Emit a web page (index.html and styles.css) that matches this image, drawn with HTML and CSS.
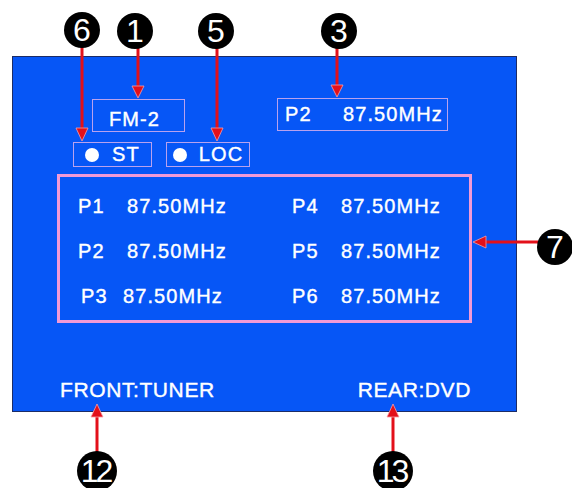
FILE: index.html
```html
<!DOCTYPE html>
<html lang="en">
<head>
    <meta charset="UTF-8">
    <meta name="viewport" content="width=device-width, initial-scale=1.0">
    <title>Tuner screen</title>
    <link rel="stylesheet" href="styles.css">
</head>
<body>
    <div id="figure">
        <div id="screen">
            <div class="rowTop">
                <div class="box band">FM-2</div>
                <div class="box preset"><span class="num">P2</span><span>87.50MHz</span></div>
            </div>

            <div class="rowFlags">
                <div class="box flag"><i class="dot"></i>ST</div>
                <div class="box flag loc"><i class="dot"></i>LOC</div>
            </div>

            <div id="memory">
                <div class="slot"><span class="num">P1</span>87.50MHz</div>
                <div class="slot"><span class="num">P4</span>87.50MHz</div>
                <div class="slot"><span class="num">P2</span>87.50MHz</div>
                <div class="slot"><span class="num">P5</span>87.50MHz</div>
                <div class="slot tight"><span class="num">P3</span>87.50MHz</div>
                <div class="slot"><span class="num">P6</span>87.50MHz</div>
            </div>

            <div class="sources">
                <span>FRONT:TUNER</span>
                <span>REAR:DVD</span>
            </div>
        </div>

        <!-- callout arrows -->
        <svg id="arrows" width="572" height="488" viewBox="0 0 572 488">
            <g stroke="#e3101a" stroke-width="3">
                <line x1="82" y1="46" x2="82" y2="130"/>
                <line x1="138" y1="48" x2="138" y2="88"/>
                <line x1="217" y1="48" x2="217" y2="130"/>
                <line x1="337" y1="48" x2="337" y2="87"/>
                <line x1="538" y1="242" x2="484" y2="242"/>
                <line x1="97" y1="452" x2="97" y2="414"/>
                <line x1="393" y1="452" x2="393" y2="414"/>
            </g>
            <g fill="#e3101a" stroke="#f7a0a8" stroke-width="0.8">
                <polygon points="76,128 88,128 82,141"/>
                <polygon points="132,86 144,86 138,98"/>
                <polygon points="211,128 223,128 217,141"/>
                <polygon points="331,85 343,85 337,97"/>
                <polygon points="486,236 486,248 473,242"/>
                <polygon points="91,417 103,417 97,404"/>
                <polygon points="387,417 399,417 393,404"/>
            </g>
        </svg>

        <div class="callout c6">6</div>
        <div class="callout c1">1</div>
        <div class="callout c5">5</div>
        <div class="callout c3">3</div>
        <div class="callout c7">7</div>
        <div class="callout wide c12">12</div>
        <div class="callout wide c13">13</div>
    </div>
</body>
</html>
```

FILE: styles.css
```css
body {
    margin: 0;
    padding: 0;
    background-color: #fff;
    font-family: "Liberation Sans", Arial, sans-serif;
}

#figure {
    position: relative;
    width: 572px;
    height: 488px;
    overflow: hidden;
    padding: 56px 0 0 12px;
    box-sizing: border-box;
}

#screen {
    width: 505px;
    height: 356px;
    box-sizing: border-box;
    border: 1px solid #1c2c66;
    background-color: #0656f6;
    color: #fff;
    font-size: 20px;
    letter-spacing: 1.1px;
    -webkit-text-stroke: 0.4px #fff;
    overflow: hidden;
}

.box {
    box-sizing: border-box;
    border: 1px solid #b9a2ee;
    display: flex;
    align-items: center;
}

.rowTop {
    display: flex;
    align-items: flex-start;
    margin-top: 41px;
}

.band {
    width: 93px;
    height: 33px;
    margin: 1px 0 0 79px;
    padding: 8px 0 0 16px;
}

.preset {
    width: 171px;
    height: 33px;
    margin-left: 92px;
    padding-left: 7px;
}

.preset .num {
    width: 58px;
}

.rowFlags {
    display: flex;
    margin-top: 10px;
    margin-left: 60px;
    gap: 14px;
}

.flag {
    width: 79px;
    height: 25px;
    justify-content: center;
    gap: 13px;
}

.flag.loc {
    width: 84px;
    gap: 12px;
}

.dot {
    width: 14px;
    height: 14px;
    border-radius: 50%;
    background-color: #fff;
}

#memory {
    width: 415px;
    height: 149px;
    box-sizing: border-box;
    margin: 7px 0 0 44px;
    border: 3px solid #f29ad6;
    padding: 6.5px 0 0 18px;
    display: grid;
    grid-template-columns: 214px auto;
    grid-auto-rows: 45px;
    line-height: 45px;
}

.slot {
    display: flex;
}

.num {
    display: inline-block;
    width: 49px;
}

.slot.tight {
    margin-left: 3px;
}

.slot.tight .num {
    width: 42px;
}

.sources {
    display: flex;
    justify-content: space-between;
    margin-top: 56px;
    padding: 0 45px 0 47px;
    font-size: 21px;
    line-height: 22px;
    letter-spacing: 0.6px;
}

#arrows {
    position: absolute;
    left: 0;
    top: 0;
}

.callout {
    position: absolute;
    width: 36px;
    height: 36px;
    border-radius: 50%;
    background-color: #000;
    color: #fff;
    font-size: 32px;
    line-height: 37px;
    text-align: center;
}

.callout.wide {
    width: 40px;
    height: 40px;
    line-height: 41px;
    letter-spacing: -3px;
    text-indent: -3px;
}

.c6 { left: 64px; top: 12px; }
.c1 { left: 117px; top: 13px; }
.c5 { left: 198px; top: 13px; }
.c3 { left: 321px; top: 13px; }
.c7 { left: 537px; top: 229px; }
.c12 { left: 77px; top: 451px; }
.c13 { left: 373px; top: 451px; }
```
